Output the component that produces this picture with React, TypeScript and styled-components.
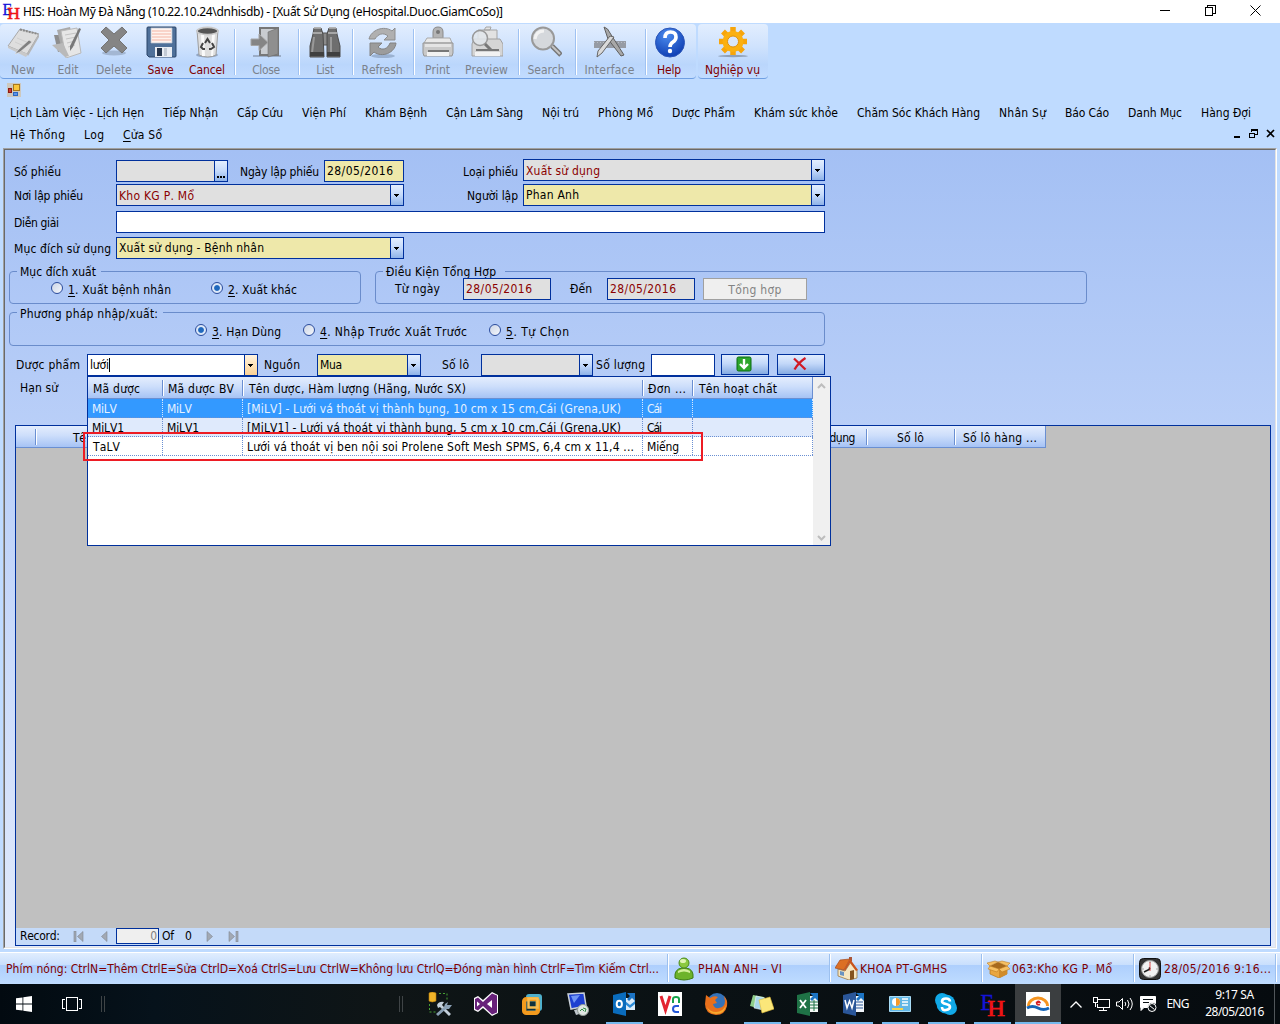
import React, { ReactNode, useLayoutEffect, useRef } from "react";
import styled, { createGlobalStyle, css } from "styled-components";

const NAVY = "#00309c";
const BUTTON_BG = "linear-gradient(#e1ecfd 0%, #c3d8f9 45%, #86abe2 100%)";
const HEADER_BG = "linear-gradient(#e4edfd 0%, #cddefb 45%, #a6c3f5 100%)";

const GlobalStyle = createGlobalStyle`
  * { box-sizing: border-box; }
  body {
    margin: 0;
    background: #bfdbff;
    font-family: "DejaVu Sans Condensed", "DejaVu Sans", "Noto Sans", sans-serif;
    font-stretch: condensed;
    font-size: 12px;
    font-kerning: none;
    line-height: 14px;
    color: #000;
    overflow: hidden;
  }
  svg { display: block; flex: none; }
`;

/* ---------- text ---------- */

const TextSpan = styled.span<{ $color?: string }>`
  display: inline-block;
  flex: none;
  white-space: pre;
  ${(p) => p.$color && css`color: ${p.$color};`}
  u { text-underline-offset: 2px; text-decoration-thickness: 1px; }
`;

/** Text tracked so that it takes exactly `w` pixels. */
function Text({ w, color, children }: { w: number; color?: string; children: ReactNode }) {
  const ref = useRef<HTMLSpanElement>(null);
  useLayoutEffect(() => {
    const el = ref.current!;
    el.style.letterSpacing = "0px";
    const n = Math.max(1, (el.textContent || "").length - 1);
    el.style.letterSpacing = `${(w - el.getBoundingClientRect().width) / n}px`;
  }, [w, children]);
  return <TextSpan ref={ref} $color={color}>{children}</TextSpan>;
}

/* ---------- window frame ---------- */

const Window = styled.div`
  width: 1280px;
  height: 1024px;
  display: flex;
  flex-direction: column;
  overflow: hidden;
`;

const TitleBar = styled.header`
  height: 23px;
  flex: none;
  background: #fff;
  display: flex;
  align-items: center;
  padding: 0 19px 2px 2px;
  font-family: "Noto Sans", "Open Sans", sans-serif;
`;

const TitleText = styled.div`
  flex: 1;
  margin-left: 3px;
  padding-top: 3px;
`;

const WindowButtons = styled.div`
  display: flex;
  align-items: center;
  gap: 34px;
`;

const ToolbarRow = styled.div`
  height: 57px;
  flex: none;
  display: flex;
  gap: 2px;
`;

const Strip = styled.div<{ $w: number }>`
  width: ${(p) => p.$w}px;
  height: 55px;
  display: flex;
  border-radius: 4px;
  margin-top: 1px;
  border-bottom: 1px solid #6f9fe3;
  background: linear-gradient(#e2eefe 0%, #d0e3fd 40%, #bad6fc 75%, #c2dcff 100%);
`;

const Tool = styled.button<{ $w: number; $on?: boolean }>`
  width: ${(p) => p.$w}px;
  border: 0;
  padding: 2px 0 0;
  background: none;
  font: inherit;
  color: ${(p) => (p.$on ? "#800000" : "#7b828c")};
  display: flex;
  flex-direction: column;
  align-items: center;
  gap: 5px;
`;

const Divider = styled.div<{ $gap: number }>`
  width: 2px;
  margin: 5px 0 3px ${(p) => p.$gap}px;
  border-left: 1px solid #9fc2f2;
  background: #fff;
`;

const IconRow = styled.div`
  height: 21px;
  flex: none;
  padding: 3px 7px;
`;

const MenuRow = styled.nav`
  height: 22px;
  flex: none;
  display: flex;
  align-items: center;
  gap: 19px;
  padding: 1px 5px 0 10px;
`;

const MenuItem = styled.div<{ $w: number }>`
  width: ${(p) => p.$w}px;
  flex: none;
`;

const MdiButtons = styled.div`
  margin-left: auto;
  display: flex;
  gap: 8px;
  align-items: center;
  padding-bottom: 3px;
`;

const Frame = styled.main`
  margin: 3px 3px 0;
  height: 801px;
  flex: none;
  border: 1px solid;
  border-color: #a0a0a0 #fff #fff #a0a0a0;
`;

const Panel = styled.div`
  height: 100%;
  border: 1px solid;
  border-color: #696969 #e3e3e3 #e3e3e3 #696969;
  background: linear-gradient(#a4c0f4 0%, #bfd3f9 45%, #e1eafc 100%);
  display: flex;
  flex-direction: column;
  padding-top: 9px;
`;

/* ---------- form ---------- */

const Columns = styled.div`
  display: flex;
`;

const Column = styled.div<{ $gap: number; $top: number }>`
  display: flex;
  flex-direction: column;
  gap: ${(p) => p.$gap}px;
  padding-top: ${(p) => p.$top}px;
`;

const Row = styled.div<{ $top?: number }>`
  display: flex;
  height: 22px;
  flex: none;
  margin-top: ${(p) => p.$top ?? 0}px;
`;

const Label = styled.label<{ $w: number; $pad?: number; $right?: number; $y?: number }>`
  width: ${(p) => p.$w}px;
  flex: none;
  padding-left: ${(p) => p.$pad ?? 0}px;
  padding-top: ${(p) => p.$y ?? 5}px;
  ${(p) => p.$right !== undefined && css`text-align: right; padding-right: ${p.$right}px;`}
`;

const TONES = { gray: "#e0e0e0", khaki: "#eee8aa", white: "#fff" };
type Tone = keyof typeof TONES;

const Box = styled.div<{ $w: number; $tone: Tone }>`
  position: relative;
  width: ${(p) => p.$w}px;
  height: 22px;
  flex: none;
  display: flex;
  border: 1px solid ${NAVY};
  background: ${(p) => TONES[p.$tone]};
`;

const BoxText = styled.div<{ $y?: number }>`
  flex: 1;
  padding: ${(p) => p.$y ?? 3}px 0 0 2px;
  display: flex;
`;

const BoxButton = styled.div<{ $hot?: boolean }>`
  width: 13px;
  padding-right: 1px;
  border-left: 1px solid ${NAVY};
  background: ${(p) => (p.$hot ? "linear-gradient(#fff3df, #fdd295)" : "linear-gradient(#e3eefe, #c5dafb 50%, #8fb3e8)")};
  display: flex;
  align-items: center;
  justify-content: center;
`;

const Caret = styled.span`
  width: 1px;
  height: 14px;
  background: #000;
`;

const Ellipsis = styled.span`
  align-self: flex-end;
  display: flex;
  gap: 1px;
  padding: 0 0 3px 1px;
  i { width: 2px; height: 2px; background: #000; }
`;

const Groups = styled.div<{ $top: number }>`
  display: flex;
  flex: none;
  margin: ${(p) => p.$top}px 0 0 4px;
  gap: 14px;
`;

const Group = styled.fieldset<{ $w: number; $h: number }>`
  width: ${(p) => p.$w}px;
  height: ${(p) => p.$h}px;
  min-width: 0;
  margin: 0;
  padding: 0;
  border: 1px solid #6a8ccb;
  border-radius: 4px;
`;

const Legend = styled.legend<{ $right?: number; $top?: number }>`
  margin-left: 7px;
  height: 14px;
  padding: ${(p) => p.$top ?? 1}px ${(p) => p.$right ?? 5}px 0 3px;
  display: flex;
`;

const Options = styled.div<{ $left: number; $top?: number }>`
  height: 22px;
  margin-top: ${(p) => p.$top ?? 0}px;
  padding-left: ${(p) => p.$left}px;
  display: flex;
`;

const Option = styled.label<{ $w: number }>`
  width: ${(p) => p.$w}px;
  flex: none;
  display: flex;
  align-items: flex-start;
  gap: 5px;
  padding-top: 4px;
  span { margin-top: 1px; }
`;

const Radio = styled.i<{ $on?: boolean }>`
  width: 12px;
  height: 12px;
  flex: none;
  border: 1px solid #2b4c9c;
  border-radius: 50%;
  background: ${(p) =>
    p.$on
      ? "radial-gradient(circle at 5px 5px, #1f68bd 0 2.4px, #dbe7f8 3.4px)"
      : "linear-gradient(135deg, #ccd5e6, #f4f7fc)"};
`;

const DisabledButton = styled.button`
  width: 104px;
  height: 22px;
  margin-left: 8px;
  padding: 2px 0 0;
  border: 1px solid #a0a0a0;
  background: #efefef;
  color: #838383;
  font: inherit;
`;

const ActionButton = styled.button<{ $left: number }>`
  width: 48px;
  height: 21px;
  margin-left: ${(p) => p.$left}px;
  padding: 0 2px 1px 0;
  border: 1px solid ${NAVY};
  background: ${BUTTON_BG};
  display: flex;
  align-items: center;
  justify-content: center;
`;

/* ---------- lookup list ---------- */

const Lookup = styled.div`
  position: absolute;
  z-index: 2;
  left: -1px;
  top: 21px;
  width: 744px;
  height: 170px;
  border: 1px solid ${NAVY};
  background: #fff;
  display: flex;
`;

const LookupTable = styled.div`
  width: 725px;
`;

const LookupHeader = styled.div`
  height: 22px;
  display: flex;
  align-items: center;
  background: ${HEADER_BG};
  border-bottom: 1px solid #6a8fd2;
  border-right: 1px solid #6a8fd2;
`;

const HeadCell = styled.div<{ $w: number; $pad?: number; $last?: boolean }>`
  width: ${(p) => p.$w}px;
  height: 16px;
  flex: none;
  padding: 2px 0 0 ${(p) => p.$pad ?? 5}px;
  ${(p) => !p.$last && css`border-right: 1px solid #6a8fd2; box-shadow: 1px 0 #fff;`}
`;

const LookupRow = styled.div<{ $bg: string; $fg?: string }>`
  height: 19px;
  display: flex;
  background: ${(p) => p.$bg};
  color: ${(p) => p.$fg ?? "#000"};
  border-bottom: 1px dotted #6a8fd2;
`;

const LookupCell = styled.div<{ $w: number; $pad?: number; $light?: boolean }>`
  width: ${(p) => p.$w}px;
  height: 18px;
  flex: none;
  padding: 3px 0 0 ${(p) => p.$pad ?? 4}px;
  border-right: 1px dotted ${(p) => (p.$light ? "#d8e8fc" : "#6a8fd2")};
`;

const LookupScroll = styled.div`
  width: 17px;
  padding: 6px 0 4px;
  background: #f0f0f0;
  display: flex;
  flex-direction: column;
  justify-content: space-between;
  align-items: center;
`;

const Highlight = styled.div`
  position: absolute;
  left: -5px;
  top: 55px;
  width: 620px;
  height: 29px;
  border: 2px solid #ed1c24;
`;

/* ---------- grid ---------- */

const Grid = styled.section`
  margin: 27px 0 0 10px;
  width: 1256px;
  height: 521px;
  flex: none;
  border: 1px solid ${NAVY};
  background: #c0c0c0;
  display: flex;
  flex-direction: column;
`;

const GridHeader = styled.div`
  width: 1030px;
  height: 22px;
  display: flex;
  align-items: center;
  background: ${HEADER_BG};
  border-bottom: 1px solid #6a8fd2;
  border-right: 1px solid #6a8fd2;
`;

const GridCaption = styled(HeadCell)<{ $align: string }>`
  display: flex;
  padding-left: ${(p) => p.$pad ?? 0}px;
  justify-content: ${(p) => p.$align};
`;

const CaptionEnd = styled.div`
  padding-right: 11px;
`;

const Navigator = styled.footer`
  height: 17px;
  margin-top: auto;
  background: #c4daf9;
  display: flex;
  padding-left: 4px;
`;

const NavText = styled.div<{ $w: number }>`
  width: ${(p) => p.$w}px;
  padding-top: 1px;
`;

const NavButton = styled.div<{ $w: number }>`
  width: ${(p) => p.$w}px;
  padding-top: 3px;
`;

const RecordBox = styled.div`
  width: 43px;
  height: 16px;
  margin-right: 3px;
  padding: 0 1px;
  border: 1px solid ${NAVY};
  background: #efefef;
  color: #808080;
  text-align: right;
`;

/* ---------- status bar ---------- */

const StatusBar = styled.footer`
  margin-top: 3px;
  height: 32px;
  flex: none;
  border-top: 1px solid #fff;
  display: flex;
  background: linear-gradient(#e0edfe 0%, #c9dffd 38%, #aecffd 40%, #bfdcff 100%);
`;

const StatusCell = styled.div<{ $w: number; $pad: number; $gap?: number }>`
  width: ${(p) => p.$w}px;
  height: 28px;
  margin-top: 1px;
  flex: none;
  display: flex;
  align-items: center;
  gap: ${(p) => p.$gap ?? 0}px;
  padding: 1px 0 0 ${(p) => p.$pad}px;
  color: #800000;
  border-right: 1px solid #fff;
  box-shadow: inset -1px 0 #9cc0ef;
`;

/* ---------- taskbar ---------- */

const Taskbar = styled.footer`
  height: 40px;
  flex: none;
  display: flex;
  background: linear-gradient(90deg, #020a10 0%, #06121b 12%, #0f1516 30%, #0a1114 55%, #060b0f 100%);
  color: #fff;
  font-family: "Noto Sans", "Open Sans", sans-serif;
`;

const Slot = styled.div<{ $w: number; $line?: number; $active?: boolean }>`
  width: ${(p) => p.$w}px;
  height: 40px;
  flex: none;
  display: flex;
  align-items: center;
  justify-content: center;
  background: ${(p) => {
    const line = p.$line ? `linear-gradient(#76b9ed, #76b9ed) center bottom / ${p.$line}px 2px no-repeat` : "none";
    return p.$active ? `${line}, #3b3e40` : line;
  }};
`;

const Grip = styled.div<{ $left: number }>`
  width: 4px;
  height: 16px;
  flex: none;
  margin: 12px 0 0 ${(p) => p.$left}px;
  border: solid #3f4446;
  border-width: 0 1px;
`;

const Clock = styled.div`
  width: 81px;
  display: flex;
  flex-direction: column;
  align-items: center;
  gap: 3px;
  padding: 4px 0 0 1px;
  border-right: 1px solid #51565a;
`;

/* ---------- toolbar icons ---------- */

const I = ({ s = 32, children, y = s }: { s?: number; y?: number; children: ReactNode }) => (
  <svg width={s} height={y} viewBox={`0 0 ${s} ${y}`} fill="none">{children}</svg>
);

const NewIcon = () => (
  <I>
    <path d="M1 20 13 3 32 8 20 28Z" fill="#dedede" stroke="#a9a9a9" />
    <path d="M1 20v2l18 9 2-3z" fill="#c9c9c9" />
    <path d="M20 28 32 8v3L21 30z" fill="#b5b5b5" />
    <path d="M13 3.500l18 4.500" stroke="#888" strokeWidth="2" strokeDasharray="2 1" />
    <path d="M10 12l12 5M8 16l9 4" stroke="#cfcfcf" />
    <path d="M22 14 11 24l-3 4 5-2 12-10z" fill="#808080" stroke="#e6e6e6" strokeWidth=".6" />
  </I>
);
const EditIcon = () => (
  <I>
    <path d="M2 9h8l4 14-8 3z" fill="#8d8d8d" />
    <path d="M5 4l13-3 6 22-13 5z" fill="#a9a9a9" />
    <path d="M9 5 25 2l4 25-15 5z" fill="#e6e6e6" stroke="#b9b9b9" />
    <path d="M0 19l11-2 6 13-4 1z" fill="#b9b9b9" />
    <path d="M13 9l11-2M14 13l10-2M15 17l8-2M16 21l7-2" stroke="#c4c4c4" />
    <path d="M27 2l2 1-8 18-3 4v-5z" fill="#787878" />
  </I>
);
const DeleteIcon = () => (
  <I>
    <ellipse cx="16" cy="27" rx="12" ry="2.500" fill="#a3b7d3" />
    <path d="M8 1l8 7 8-7 5 5-8 8 8 8-5 5-8-7-8 7-5-5 8-8-8-8z" fill="#858585" stroke="#747474" />
  </I>
);
const SaveIcon = () => (
  <I>
    <path d="M2 2q0-1 1-1h27q1 0 1 1v28q0 1-1 1H4l-2-2z" fill="#4f7099" stroke="#2b4469" />
    <path d="M6 2h21v15H6z" fill="#fff3ee" stroke="#b7c2d0" strokeWidth=".7" />
    <path d="M7 5h19M7 8h19M7 11h19M7 14h19" stroke="#f3b5a5" />
    <path d="M10 21h17v10H10z" fill="#e9edf3" />
    <path d="M12 22h5v8h-5z" fill="#27364d" />
    <path d="M19 22h3v8h-3z" fill="#c3cad4" />
  </I>
);
const TrashIcon = () => (
  <I>
    <ellipse cx="16" cy="29" rx="11" ry="2.500" fill="#93a7c4" />
    <path d="M6 4h21l-2 25q-8 4-17 0z" fill="#dedede" stroke="#9d9d9d" />
    <path d="M10 8h3l1 22h-3zM21 8h3l-2 22h-2z" fill="#fafafa" />
    <ellipse cx="16.5" cy="5" rx="10.500" ry="3.600" fill="#555" stroke="#c9c9c9" strokeWidth="1.600" />
    <path d="M14 17l2.500-4 2.500 4M21 17l2 4-3 2h-2M14 23h-2l-2-2 2-4" stroke="#444" strokeWidth="2" />
  </I>
);
const CloseIcon = () => (
  <I>
    <path d="M3 30h28" stroke="#9badc7" strokeWidth="2" />
    <path d="M10 2h18v27H10z" fill="#c9ccd0" stroke="#777" strokeWidth="2" />
    <path d="M28 2v27l-9-3V6z" fill="#868686" />
    <path d="M28 2L18 6v25l10-3z" fill="#8f8f8f" stroke="#6f6f6f" strokeWidth=".6" />
    <path d="M1 13h8V8l9 8.500-9 8v-5H1z" fill="#858585" stroke="#a5a5a5" />
  </I>
);
const ListIcon = () => (
  <I>
    <path d="M13 7h6v12h-6z" fill="#8b8b8b" stroke="#555" />
    <path d="M5 2h7l2 6 1 23H1V20L4 8zM20 2h7l1 6 3 12v11H18V8z" fill="#6e6e6e" stroke="#4d4d4d" />
    <path d="M5 2h7M20 2h7M4 7h9M19 7h9" stroke="#b9b9b9" strokeWidth="1.500" />
    <path d="M5 11L3 27M22 11v16" stroke="#999" strokeWidth="2" />
    <path d="M1 28h14M18 28h13" stroke="#3f3f3f" strokeWidth="4" />
  </I>
);
const RefreshIcon = () => (
  <I>
    <ellipse cx="17" cy="30" rx="12" ry="2" fill="#9bb2d2" />
    <path d="M3 13C5 4 18-1 26 5l3-3v12H18l4-4c-5-4-10-2-13 3z" fill="#b0b0b0" stroke="#8d8d8d" />
    <path d="M30 17c-1 10-14 15-22 9l-4 4V17h12l-4 4c4 4 10 2 12-4z" fill="#9c9c9c" stroke="#828282" />
  </I>
);
const PrintIcon = () => (
  <I>
    <path d="M11 12V6q0-5 5-5t5 5v6z" fill="#b4b4b4" stroke="#8a8a8a" />
    <circle cx="16" cy="6" r="2" fill="#777" />
    <path d="M5 12h23l2 5H2z" fill="#e9e9e9" stroke="#aaa" />
    <path d="M1 17h30v10l-1 3H2l-1-3z" fill="#c9c9c9" stroke="#959595" />
    <path d="M3 18h26v3H3z" fill="#e4e4e4" />
    <path d="M6 24h21v2H6z" fill="#777" />
    <path d="M5 26h22v4H5z" fill="#f2f2f2" />
  </I>
);
const PreviewIcon = () => (
  <I>
    <path d="M13 4h6l1-3h-5zM7 4h19v12H7z" fill="#e2e2e2" stroke="#a4a4a4" />
    <path d="M3 13h26l3 5v12H1V18z" fill="#d5d5d5" stroke="#a0a0a0" />
    <path d="M5 23h23v2H5z" fill="#777" />
    <path d="M4 26h25v4H4z" fill="#f2f2f2" />
    <circle cx="9" cy="12" r="7.500" fill="#e2e6eb" fillOpacity=".85" stroke="#999" strokeWidth="1.500" />
    <path d="M14 18l6 6" stroke="#777" strokeWidth="3" />
  </I>
);
const SearchIcon = () => (
  <I>
    <path d="M22 20l9 9" stroke="#777" strokeWidth="5" />
    <path d="M22 20l8 8" stroke="#c4c4c4" strokeWidth="2" />
    <circle cx="13" cy="12.500" r="11" fill="#d5d8dc" stroke="#999" strokeWidth="2" />
    <path d="M5 13q1-8 9-8" stroke="#f2f2f2" strokeWidth="3" />
  </I>
);
const InterfaceIcon = () => (
  <I>
    <path d="M0 15h32v7H0z" fill="#969ba4" />
    <path d="M0 16.500h32" stroke="#b8bcc3" strokeDasharray="1 2" />
    <path d="M10 1q4 1 6 6l14 22-3 1L14 13z" fill="#a8a8a8" stroke="#5f5f5f" />
    <path d="M16 10l4 1L8 27l-5 4 1-6z" fill="#dadada" stroke="#666" />
  </I>
);
const HelpIcon = () => (
  <I>
    <defs>
      <radialGradient id="help" cx=".4" cy=".25" r=".8">
        <stop offset="0" stopColor="#4b8bee" /><stop offset="1" stopColor="#0c3bb0" />
      </radialGradient>
    </defs>
    <circle cx="17" cy="16.500" r="14.500" fill="url(#help)" stroke="#2b55b8" />
    <path d="M12 12q0-6 5.500-6t5.500 5q0 3-3 5t-3 5" stroke="#fff" strokeWidth="3.600" />
    <circle cx="17" cy="25" r="2.200" fill="#fff" />
  </I>
);
const GearIcon = () => (
  <I>
    <ellipse cx="16" cy="30" rx="15" ry="1.200" fill="#8fa0b8" />
    <g stroke="#f7a50b" strokeWidth="5.500">
      <path d="M16 1v28M2 15.500h28M6 5.500l20 20M6 25.500l20-20" />
    </g>
    <circle cx="16" cy="15.500" r="10.500" fill="#fbb010" />
    <circle cx="16" cy="15.500" r="5.500" fill="#d8e6fb" stroke="#e0920a" />
  </I>
);

type ToolSpec = { label: string; w: number; tw: number; icon: ReactNode; on?: boolean } | { gap: number };

const TOOLS: ToolSpec[] = [
  { label: "New", w: 46, tw: 24, icon: <NewIcon /> },
  { label: "Edit", w: 44, tw: 21, icon: <EditIcon /> },
  { label: "Delete", w: 48, tw: 36, icon: <DeleteIcon /> },
  { label: "Save", w: 45, tw: 26, icon: <SaveIcon />, on: true },
  { label: "Cancel", w: 48, tw: 36, icon: <TrashIcon />, on: true },
  { gap: 3 },
  { label: "Close", w: 60, tw: 28, icon: <CloseIcon /> },
  { gap: 2 },
  { label: "List", w: 50, tw: 18, icon: <ListIcon /> },
  { gap: 2 },
  { label: "Refresh", w: 56, tw: 41, icon: <RefreshIcon /> },
  { gap: 3 },
  { label: "Print", w: 45, tw: 25, icon: <PrintIcon /> },
  { label: "Preview", w: 53, tw: 43, icon: <PreviewIcon /> },
  { gap: 5 },
  { label: "Search", w: 52, tw: 37, icon: <SearchIcon /> },
  { gap: 3 },
  { label: "Interface", w: 65, tw: 50, icon: <InterfaceIcon /> },
  { gap: 3 },
  { label: "Help", w: 44, tw: 24, icon: <HelpIcon />, on: true },
];

const MENU: [string, number][] = [
  ["Lịch Làm Việc - Lịch Hẹn", 134], ["Tiếp Nhận", 55], ["Cấp Cứu", 46], ["Viện Phí", 44],
  ["Khám Bệnh", 62], ["Cận Lâm Sàng", 77], ["Nội trú", 37], ["Phòng Mổ", 55], ["Dược Phẩm", 63],
  ["Khám sức khỏe", 84], ["Chăm Sóc Khách Hàng", 123], ["Nhân Sự", 47], ["Báo Cáo", 44],
  ["Danh Mục", 54], ["Hàng Đợi", 50],
];

/* ---------- small parts ---------- */

const Arrow = () => (
  <svg width="5" height="3" viewBox="0 0 5 3" shapeRendering="crispEdges"><path d="M0 0h5v1H4v1H3v1H2V2H1V1H0z" fill="#000" /></svg>
);

function Select(p: { w: number; tone: Tone; text?: string; tw?: number; color?: string; y?: number }) {
  return (
    <Box $w={p.w} $tone={p.tone}>
      <BoxText $y={p.y}>{p.text && <Text w={p.tw!} color={p.color}>{p.text}</Text>}</BoxText>
      <BoxButton><Arrow /></BoxButton>
    </Box>
  );
}

function Choice({ n, text, w, tw, on }: { n: number; text: string; w: number; tw: number; on?: boolean }) {
  return (
    <Option $w={w}>
      <Radio $on={on} />
      <Text w={tw}><u>{n}</u>{`. ${text}`}</Text>
    </Option>
  );
}

const Logo = styled.svg`
  overflow: visible;
  font-family: "Liberation Serif", serif;
  font-size: 22px;
`;

const EhLogo = ({ size }: { size: number }) => (
  <Logo width={size} height={size} viewBox="0 0 24 24">
    <text x="0.500" y="17" fill="#1414d8" stroke="#1414d8" strokeWidth=".4" textLength="13" lengthAdjust="spacingAndGlyphs">E</text>
    <text x="7" y="23" fill="#f01414" stroke="#f01414" strokeWidth=".7" textLength="17" lengthAdjust="spacingAndGlyphs">H</text>
  </Logo>
);

function TitleArea() {
  return (
    <TitleBar>
      <EhLogo size={18} />
      <TitleText><Text w={480}>{"HIS: Hoàn Mỹ Đà Nẵng (10.22.10.24\\dnhisdb) - [Xuất Sử Dụng (eHospital.Duoc.GiamCoSo)]"}</Text></TitleText>
      <WindowButtons>
        <svg width="11" height="11" shapeRendering="crispEdges"><path d="M0 5h10v1H0z" /></svg>
        <svg width="11" height="11" fill="none" stroke="#000" shapeRendering="crispEdges"><path d="M.5 2.500h7v8h-7zM2.500 2V.5h8v8H8" /></svg>
        <svg width="11" height="11" stroke="#000"><path d="M.5.5l10 10M10.500.5l-10 10" /></svg>
      </WindowButtons>
    </TitleBar>
  );
}

function Toolbar() {
  return (
    <ToolbarRow>
      <Strip $w={696}>
        {TOOLS.map((t, i) =>
          "gap" in t ? (
            <Divider key={i} $gap={t.gap} />
          ) : (
            <Tool key={i} $w={t.w} $on={t.on}>
              {t.icon}
              <Text w={t.tw}>{t.label}</Text>
            </Tool>
          )
        )}
      </Strip>
      <Strip $w={70}>
        <Tool $w={69} $on><GearIcon /><Text w={55}>Nghiệp vụ</Text></Tool>
      </Strip>
    </ToolbarRow>
  );
}

function Menus() {
  return (
    <>
      <IconRow>
        <svg width="14" height="14" shapeRendering="crispEdges">
          <path d="M0 0h14v14H0z" fill="#cdc8be" />
          <path d="M6.500 1.500h6v6h-6z" fill="#f9c63c" stroke="#a8781c" />
          <path d="M1.500 5.500h3v4h-3z" fill="#d0392e" stroke="#8a1a12" />
          <path d="M6.500 9.500h4v3h-4z" fill="#5a94ea" stroke="#2c66c0" />
        </svg>
      </IconRow>
      <MenuRow>
        {MENU.map(([label, w]) => <MenuItem key={label} $w={w}><Text w={w}>{label}</Text></MenuItem>)}
      </MenuRow>
      <MenuRow>
        <MenuItem $w={55}><Text w={55}>Hệ Thống</Text></MenuItem>
        <MenuItem $w={20}><Text w={20}>Log</Text></MenuItem>
        <MenuItem $w={39}><Text w={39}><u>C</u>ửa Sổ</Text></MenuItem>
        <MdiButtons>
          <svg width="8" height="9" shapeRendering="crispEdges"><path d="M1 7h6v2H1z" /></svg>
          <svg width="9" height="9" fill="none" stroke="#000" shapeRendering="crispEdges"><path d="M.5 4h5v4.500h-5zM0 4.500h6M2.500 3V.5h6v5H6M2 1.500h7" /></svg>
          <svg width="9" height="9" stroke="#000" strokeWidth="1.700"><path d="M1 1l7 7M8 1l-7 7" /></svg>
        </MdiButtons>
      </MenuRow>
    </>
  );
}

const COLS = [75, 80, 400, 50, 120];

function LookupList() {
  const rows = [
    { bg: "#3399ff", fg: "#e6f1ff", light: true, cells: [["MiLV", 25], ["MiLV", 25], ["[MiLV] - Lưới vá thoát vị thành bụng, 10 cm x 15 cm,Cái (Grena,UK)", 374], ["Cái", 15]] },
    { bg: "#dfeafc", cells: [["MiLV1", 32], ["MiLV1", 32], ["[MiLV1] - Lưới vá thoát vị thành bụng, 5 cm x 10 cm,Cái (Grena,UK)", 374], ["Cái", 15]] },
    { bg: "#fff", cells: [["TaLV", 27], null, ["Lưới vá thoát vị ben nội soi Prolene Soft Mesh SPMS, 6,4 cm x 11,4 ...", 387], ["Miếng", 32]] },
  ] as { bg: string; fg?: string; light?: boolean; cells: ([string, number] | null)[] }[];
  const heads: [string, number][] = [["Mã dược", 47], ["Mã dược BV", 66], ["Tên dược, Hàm lượng (Hãng, Nước SX)", 217], ["Đơn ...", 38], ["Tên hoạt chất", 78]];
  return (
    <Lookup>
      <LookupTable>
        <LookupHeader>
          {heads.map(([h, tw], i) => (
            <HeadCell key={h} $w={COLS[i]} $pad={i < 2 ? 5 : i === 3 ? 5 : 6} $last={i === 4}><Text w={tw}>{h}</Text></HeadCell>
          ))}
        </LookupHeader>
        {rows.map((r, i) => (
          <LookupRow key={i} $bg={r.bg} $fg={r.fg}>
            {COLS.map((w, c) => {
              const cell = r.cells[c];
              return (
                <LookupCell key={c} $w={w} $light={r.light} $pad={i === 2 && c === 0 ? 5 : 4}>
                  {cell && <Text w={cell[1]}>{cell[0]}</Text>}
                </LookupCell>
              );
            })}
          </LookupRow>
        ))}
      </LookupTable>
      <LookupScroll>
        <svg width="9" height="6" fill="none" stroke="#bdbdbd" strokeWidth="2"><path d="M1 5l3.500-3.500L8 5" /></svg>
        <svg width="9" height="6" fill="none" stroke="#bdbdbd" strokeWidth="2"><path d="M1 1l3.500 3.500L8 1" /></svg>
      </LookupScroll>
      <Highlight />
    </Lookup>
  );
}

function Form() {
  const red = "#8b0000";
  return (
    <>
      <Columns>
        <Column $gap={2} $top={1}>
          <Row>
            <Label $w={111} $pad={9}><Text w={47}>Số phiếu</Text></Label>
            <Box $w={112} $tone="gray">
              <BoxText />
              <BoxButton><Ellipsis><i /><i /><i /></Ellipsis></BoxButton>
            </Box>
            <Label $w={96} $pad={12}><Text w={79}>Ngày lập phiếu</Text></Label>
            <Box $w={80} $tone="khaki"><BoxText><Text w={66}>28/05/2016</Text></BoxText></Box>
          </Row>
          <Row>
            <Label $w={111} $pad={9}><Text w={69}>Nơi lập phiếu</Text></Label>
            <Select w={288} tone="gray" text="Kho KG P. Mổ" tw={75} color={red} y={4} />
          </Row>
        </Column>
        <Column $gap={3} $top={0}>
          <Row>
            <Label $w={119} $right={5} $y={6}><Text w={55}>Loại phiếu</Text></Label>
            <Select w={302} tone="gray" text="Xuất sử dụng" tw={74} color={red} y={4} />
          </Row>
          <Row>
            <Label $w={119} $right={5}><Text w={51}>Người lập</Text></Label>
            <Select w={302} tone="khaki" text="Phan Anh" tw={53} />
          </Row>
        </Column>
      </Columns>
      <Row $top={5}>
        <Label $w={111} $pad={9}><Text w={45}>Diễn giải</Text></Label>
        <Box $w={709} $tone="white" />
      </Row>
      <Row $top={4}>
        <Label $w={111} $pad={9}><Text w={97}>Mục đích sử dụng</Text></Label>
        <Select w={288} tone="khaki" text="Xuất sử dụng - Bệnh nhân" tw={145} />
      </Row>
      <Groups $top={5}>
        <Group $w={352} $h={40}>
          <Legend><Text w={76}>Mục đích xuất</Text></Legend>
          <Options $left={41}>
            <Choice n={1} text="Xuất bệnh nhân" w={160} tw={103} />
            <Choice n={2} text="Xuất khác" w={110} tw={69} on />
          </Options>
        </Group>
        <Group $w={712} $h={40}>
          <Legend $right={9}><Text w={110}>Điều Kiện Tổng Hợp</Text></Legend>
          <Options $left={0}>
            <Label $w={87} $pad={19} $y={4}><Text w={45}>Từ ngày</Text></Label>
            <Box $w={88} $tone="gray"><BoxText><Text w={66} color={red}>28/05/2016</Text></BoxText></Box>
            <Label $w={56} $pad={19} $y={4}><Text w={22}>Đến</Text></Label>
            <Box $w={88} $tone="gray"><BoxText><Text w={66} color={red}>28/05/2016</Text></BoxText></Box>
            <DisabledButton><Text w={53}>Tổng hợp</Text></DisabledButton>
          </Options>
        </Group>
      </Groups>
      <Groups $top={1}>
        <Group $w={816} $h={41}>
          <Legend $top={2}><Text w={138}>Phương pháp nhập/xuất:</Text></Legend>
          <Options $left={185} $top={1}>
            <Choice n={3} text="Hạn Dùng" w={108} tw={69} on />
            <Choice n={4} text="Nhập Trước Xuất Trước" w={186} tw={147} />
            <Choice n={5} text="Tự Chọn" w={100} tw={63} />
          </Options>
        </Group>
      </Groups>
      <Row $top={8}>
        <Label $w={82} $pad={11} $y={4}><Text w={64}>Dược phẩm</Text></Label>
        <Box $w={171} $tone="white">
          <BoxText><Text w={19}>lưới</Text><Caret /></BoxText>
          <BoxButton $hot><Arrow /></BoxButton>
          <LookupList />
        </Box>
        <Label $w={59} $pad={6} $y={4}><Text w={36}>Nguồn</Text></Label>
        <Select w={104} tone="khaki" text="Mua" tw={22} />
        <Label $w={60} $pad={21} $y={4}><Text w={27}>Số lô</Text></Label>
        <Select w={112} tone="gray" />
        <Label $w={58} $pad={3} $y={4}><Text w={49}>Số lượng</Text></Label>
        <Box $w={64} $tone="white" />
        <ActionButton $left={6}>
          <svg width="16" height="16">
            <rect x="1" y="1" width="14" height="14" rx="1.500" fill="#2da52b" stroke="#0b6b12" />
            <path d="M8 3v9M4 8l4 4 4-4" stroke="#fff" strokeWidth="2.400" fill="none" />
          </svg>
        </ActionButton>
        <ActionButton $left={8}>
          <svg width="14" height="14" fill="none" stroke="#d11a26" strokeWidth="2.300"><path d="M1 1.500l11.500 11M12.500 1Q6 5 1.500 12.500" /></svg>
        </ActionButton>
      </Row>
      <Row>
        <Label $w={82} $pad={15}><Text w={38}>Hạn sử</Text></Label>
      </Row>
    </>
  );
}

const NavGlyph = ({ flip, end }: { flip?: boolean; end?: boolean }) => (
  <svg width="11" height="11" viewBox="0 0 11 11" fill="#a2a9b4" stroke="#7f8791" strokeWidth=".6">
    <g transform={flip ? "translate(11 0) scale(-1 1)" : undefined}>
      {end && <path d="M1 0h2v11H1z" />}
      <path d={end ? "M10 .5v10L4.500 5.500z" : "M7 .5v10L1.500 5.500z"} />
    </g>
  </svg>
);

function DataGrid() {
  return (
    <Grid>
      <GridHeader>
        <GridCaption $w={20} $align="start" />
        <GridCaption $w={92} $align="start" $pad={37}><Text w={13}>Tê</Text></GridCaption>
        <GridCaption $w={739} $align="flex-end"><CaptionEnd><Text w={26}>dụng</Text></CaptionEnd></GridCaption>
        <GridCaption $w={88} $align="center"><Text w={27}>Số lô</Text></GridCaption>
        <GridCaption $w={90} $align="center" $last><Text w={74}>Số lô hàng ...</Text></GridCaption>
      </GridHeader>
      <Navigator>
        <NavText $w={53}><Text w={40}>Record:</Text></NavText>
        <NavButton $w={27}><NavGlyph end /></NavButton>
        <NavButton $w={16}><NavGlyph /></NavButton>
        <RecordBox>0</RecordBox>
        <NavText $w={23}><Text w={12}>Of</Text></NavText>
        <NavText $w={18}>0</NavText>
        <NavButton $w={25}><NavGlyph flip /></NavButton>
        <NavButton $w={20}><NavGlyph flip end /></NavButton>
      </Navigator>
    </Grid>
  );
}

function Status() {
  return (
    <StatusBar>
      <StatusCell $w={669} $pad={6}>
        <Text w={653}>Phím nóng: CtrlN=Thêm CtrlE=Sửa CtrlD=Xoá CtrlS=Lưu CtrlW=Không lưu CtrlQ=Đóng màn hình CtrlF=Tìm Kiếm Ctrl...</Text>
      </StatusCell>
      <StatusCell $w={162} $pad={5} $gap={4}>
        <svg width="20" height="24">
          <path d="M1 21q-1-9 7-10h4q8 1 7 10-9 4-18 0z" fill="#6db32a" stroke="#3d7d12" />
          <path d="M4 14q6-4 12 0v2q-6-3-12 0z" fill="#d3f09b" />
          <circle cx="10" cy="6" r="5" fill="#8bc93f" stroke="#4c8b1d" />
          <ellipse cx="9" cy="4" rx="3" ry="2" fill="#e0f5b4" />
        </svg>
        <Text w={84}>PHAN ANH - VI</Text>
      </StatusCell>
      <StatusCell $w={152} $pad={4} $gap={2}>
        <svg width="23" height="23">
          <path d="M14 0h3v5l-3-3z" fill="#a9563a" />
          <path d="M3 12l7 2 6-9 6 8v8l-8 2-11-4z" fill="#f6e6c2" stroke="#9a7846" strokeWidth=".8" />
          <path d="M0 11L5 3l10-1-6 11z" fill="#dc6f24" stroke="#a3481a" strokeWidth=".7" />
          <path d="M15 2l8 11-2 1-6-8-5 8-1-1z" fill="#c9541c" />
          <path d="M15 14l4-1v9l-4 1z" fill="#83521f" />
          <path d="M5 14l4 1v4l-4-1z" fill="#6b93c1" />
        </svg>
        <Text w={87}>KHOA PT-GMHS</Text>
      </StatusCell>
      <StatusCell $w={152} $pad={4} $gap={2}>
        <svg width="23" height="18">
          <path d="M3 6l9 3 8-3v8l-8 4-9-4z" fill="#e9a641" stroke="#b3751c" strokeWidth=".7" />
          <path d="M12 9v9l8-4V6z" fill="#d18b2a" />
          <path d="M3 6l8-4 9 4-8 3z" fill="#a86a1c" />
          <path d="M3 6L0 3l8-2 3 1zM20 6l3-3-8-2-4 1zM3 6l-2 3 9 3 2-3zM20 6l3 3-8 3-3-3z" fill="#f6c063" stroke="#b77318" strokeWidth=".5" />
        </svg>
        <Text w={100}>063:Kho KG P. Mổ</Text>
      </StatusCell>
      <StatusCell $w={142} $pad={4} $gap={3}>
        <svg width="22" height="22">
          <rect x=".5" y=".5" width="21" height="21" rx="4" fill="#333" stroke="#111" />
          <circle cx="11" cy="11" r="8.500" fill="#f2f2f2" stroke="#999" />
          <path d="M11 11l-1-1.500M11 11l-6 3" stroke="#222" strokeWidth="1.500" />
          <path d="M11 13V4" stroke="#d22" strokeWidth=".8" />
          <path d="M11 3.500v1M11 17.500v1M3.500 11h1M17.500 11h1" stroke="#555" />
        </svg>
        <Text w={107}>28/05/2016 9:16...</Text>
      </StatusCell>
    </StatusBar>
  );
}

/* ---------- taskbar icons ---------- */

const APPS: { icon: ReactNode; line?: number; active?: boolean }[] = [
  {
    icon: (
      <I s={24}>
        <path d="M1 1q3-2 7 0v8q-4 2-7 0z" fill="#f0b429" stroke="#b67c0a" strokeWidth=".6" />
        <path d="M11 1.500h8v8M1.500 12v8h8" stroke="#46a035" strokeDasharray="2 2" />
        <path d="M9 13q2-4 7-3l-2 3 9 9-2 2-9-9-2 1z" fill="#c3cfdb" />
        <path d="M24 13l-3 4-3 0-8 7-2-2 8-7 1-3 3-2-1 3z" fill="#8aa0b5" />
      </I>
    ),
  },
  {
    icon: (
      <I s={24}>
        <path d="M18 0l6 3v18l-6 3-9-8-5 4-4-2V6l4-2 5 4z" fill="#fff" />
        <path d="M18 1.500l5 2v17l-5 2-9-8.500-5 4.500-3-1.500V7l3-1.500L9 10z" fill="#68217a" />
        <path d="M18 8v8l-5-4zM3 9.500v5L6 12z" fill="#fff" />
      </I>
    ),
  },
  {
    icon: (
      <I s={24}>
        <rect x="6" y="2" width="16" height="17" rx="3" fill="#4fb0cc" />
        <rect x="4.250" y="7.250" width="13.500" height="13.500" rx="2" stroke="#f39a1e" strokeWidth="4.500" />
        <rect x="6.500" y="9.500" width="9" height="9" fill="#12303c" />
        <rect x="8.500" y="6.500" width="9" height="9" stroke="#f9bd52" strokeWidth="2.500" />
      </I>
    ),
  },
  {
    icon: (
      <I s={24}>
        <path d="M2 2l16-1 2 13-15 3z" fill="#1d3fd0" stroke="#c9d0d8" strokeWidth="1.500" />
        <path d="M5 4l9-1-6 8z" fill="#6e94f5" />
        <path d="M8 18l8-2 4 4-10 3z" fill="#bfc6cc" />
        <circle cx="17" cy="18" r="5.500" fill="#dfe5e2" stroke="#8f9a95" />
        <path d="M14 19l2-2 2 2M17 16l3 1-1 3" stroke="#2f8d45" />
      </I>
    ),
  },
  {
    line: 37,
    icon: (
      <I s={24}>
        <path d="M13 6h10v12H13z" fill="#dcecf9" />
        <path d="M13 9l5 4 5-4v3l-5 4-5-4z" fill="#2b8ad6" />
        <path d="M15 1h8v8l-3-3-3 3-2-2 3-3z" fill="#1c74c4" />
        <path d="M1 3l13-3v24L1 21z" fill="#0a6cbd" />
        <ellipse cx="7.300" cy="12" rx="2.600" ry="3.300" stroke="#fff" strokeWidth="2" />
      </I>
    ),
  },
  {
    icon: (
      <I s={24}>
        <path d="M0 0h24v24H0z" fill="#fff" />
        <path d="M3 4l4.500 14L12 4" stroke="#e32531" strokeWidth="3" />
        <path d="M15 11V7q0-2 3-2t3 2v4" stroke="#16a24a" strokeWidth="2" />
        <path d="M21 14h-3q-3 0-3 3t3 3h3" stroke="#2357d8" strokeWidth="2" />
      </I>
    ),
  },
  {
    icon: (
      <I s={24}>
        <circle cx="13" cy="11" r="10" fill="#3572b8" />
        <path d="M2 3l4 3q4-3 8-1l-3 3 2 3-4 1q1 5 6 4 6-1 6-7l-1-5q4 4 3 10-2 9-11 9Q1 22 1 12z" fill="#e9701b" />
        <path d="M3 15q2 7 9 7 9 0 10-9-3 7-10 7-6 0-9-5z" fill="#f7a92d" />
      </I>
    ),
  },
  {
    line: 37,
    icon: (
      <I s={24}>
        <path d="M3 3l11 2-3 12-11-3z" fill="#8fce8b" />
        <path d="M6 4l9 2-2 12-9-2z" fill="#a8d6ea" stroke="#fff" strokeWidth=".5" />
        <path d="M9 8l11-3 4 12-12 4z" fill="#fbe77a" stroke="#e0bd3b" strokeWidth=".6" />
      </I>
    ),
  },
  {
    line: 37,
    icon: (
      <I s={24}>
        <path d="M12 4h10v16H12z" fill="#f4f8f5" />
        <path d="M14 10h8M14 13h8M14 16h8M18 8v11" stroke="#1f7246" />
        <path d="M14 1h8v8l-3-3-3 3-2-2 3-3z" fill="#1c74c4" />
        <path d="M1 3l13-3v24L1 21z" fill="#1f7246" />
        <path d="M4 8l6 8M10 8l-6 8" stroke="#fff" strokeWidth="1.800" />
      </I>
    ),
  },
  {
    line: 37,
    icon: (
      <I s={24}>
        <path d="M12 4h10v16H12z" fill="#f2f6fb" />
        <path d="M14 10h7M14 13h7M14 16h7" stroke="#2a5699" />
        <path d="M14 1h8v8l-3-3-3 3-2-2 3-3z" fill="#1c74c4" />
        <path d="M1 3l13-3v24L1 21z" fill="#2a5699" />
        <path d="M3 8l2 8 2.500-7L10 16l2-8" stroke="#fff" strokeWidth="1.500" />
      </I>
    ),
  },
  {
    line: 37,
    icon: (
      <I s={24}>
        <path d="M1.500 4.500h21v15h-21z" fill="#62b7e6" stroke="#a8dcf6" />
        <circle cx="8" cy="10" r="4" fill="#fff" />
        <path d="M8 10V6a4 4 0 010 8z" fill="#f39a2b" />
        <path d="M14 7h6M14 10h6M14 13h6" stroke="#fff" strokeWidth="1.500" />
        <path d="M4 17h11" stroke="#f5d44c" strokeWidth="2" />
      </I>
    ),
  },
  {
    line: 37,
    icon: (
      <I s={24}>
        <circle cx="8" cy="8" r="7" fill="#11a9e8" />
        <circle cx="16" cy="16" r="7" fill="#11a9e8" />
        <circle cx="12" cy="12" r="9.500" fill="#11a9e8" />
        <path d="M16 9.500q0-3-4-3t-4 3q0 1.700 4 2.500t4 3-4 3-4-3" stroke="#fff" strokeWidth="2.600" />
      </I>
    ),
  },
  { line: 37, icon: <EhLogo size={25} /> },
  {
    line: 46,
    active: true,
    icon: (
      <I s={24}>
        <path d="M0 0h24v24H0z" fill="#fff" />
        <path d="M2.500 14a9.500 8 0 0119 0" stroke="#f5941f" strokeWidth="3" />
        <path d="M1 16q5.500-3 11 0t11 0" stroke="#1565b8" strokeWidth="3" />
        <path d="M10.500 10.500q2.500-2.500 3.500 0h-3.500q0 3 3.500 2" stroke="#d42027" strokeWidth="1.500" />
      </I>
    ),
  },
];

function TaskbarArea() {
  return (
    <Taskbar>
      <Slot $w={48}>
        <svg width="16" height="16" fill="#fff"><path d="M0 2.300L6.500 1.400v6.200H0zM7.300 1.300L16 0v7.600H7.300zM0 8.400h6.500v6.200L0 13.700zM7.300 8.400H16V16l-8.700-1.300z" /></svg>
      </Slot>
      <Slot $w={48}>
        <svg width="20" height="14" fill="none" stroke="#fff" shapeRendering="crispEdges"><path d="M4.500.5h11v13h-11zM3 2.500H.5v9H3M17 2.500h2.500v9H17" /></svg>
      </Slot>
      <Grip $left={5} />
      <Grip $left={294} />
      <Slot $w={14} />
      {APPS.map((a, i) => <Slot key={i} $w={46} $line={a.line} $active={a.active}>{a.icon}</Slot>)}
      <Slot $w={29}>
        <svg width="12" height="7" fill="none" stroke="#fff" strokeWidth="1.300"><path d="M.5 6.500L6 1l5.500 5.500" /></svg>
      </Slot>
      <Slot $w={22}>
        <svg width="17" height="14" fill="none" stroke="#fff" shapeRendering="crispEdges"><path d="M5 2.500h11v8H4.500V7M.5.5h4v5h-4zM2.500 6v4M10 11v2M6 13.500h8" /></svg>
      </Slot>
      <Slot $w={24}>
        <svg width="17" height="14" fill="none" stroke="#fff"><path d="M.5 5h2.500l3.500-3.500v11L3 9H.5zM9 5q1.500 2 0 4M11.500 3q3 4 0 8M14 1q4.500 6 0 12" /></svg>
      </Slot>
      <Slot $w={25}>
        <svg width="17" height="16" fill="none" stroke="#fff">
          <path d="M.5.5h15v7a5 5 0 00-8 4H4l-3 3v-3H.5z" fill="#fff" />
          <path d="M3 3.500h10M3 6.500h6" stroke="#0a1014" />
          <circle cx="12" cy="11.500" r="4" fill="#0a1014" />
          <path d="M9.500 9.500l5 4" />
        </svg>
      </Slot>
      <Slot $w={33}><Text w={23}>ENG</Text></Slot>
      <Clock>
        <Text w={39}>9:17 SA</Text>
        <Text w={59}>28/05/2016</Text>
      </Clock>
    </Taskbar>
  );
}

export default function App() {
  return (
    <Window>
      <GlobalStyle />
      <TitleArea />
      <Toolbar />
      <Menus />
      <Frame>
        <Panel>
          <Form />
          <DataGrid />
        </Panel>
      </Frame>
      <Status />
      <TaskbarArea />
    </Window>
  );
}
